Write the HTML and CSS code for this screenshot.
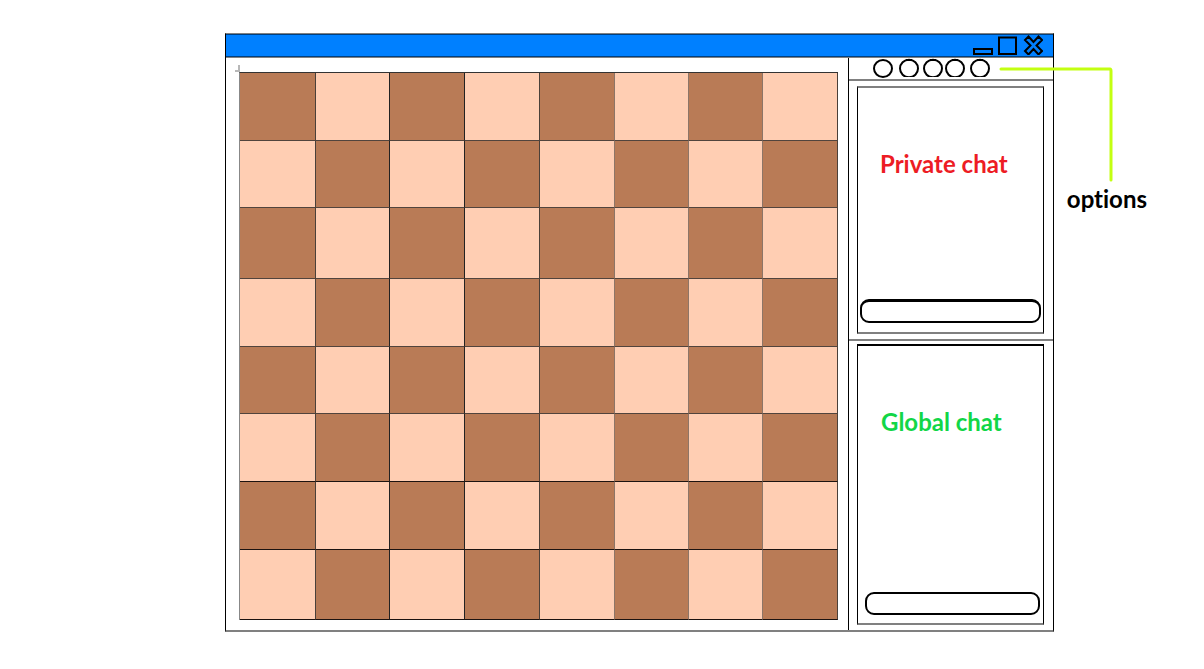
FILE: index.html
```
<!DOCTYPE html>
<html lang="en">
<head>
<meta charset="utf-8">
<title>Chess client wireframe</title>
<link rel="stylesheet" href="styles.css">
</head>
<body>
<main class="window">
  <header class="titlebar">
    <button class="control" type="button" aria-label="Minimise">
      <svg width="20" height="20" viewBox="0 0 20 20"><rect x="1" y="14" width="18" height="5"/></svg>
    </button>
    <button class="control" type="button" aria-label="Maximise">
      <svg width="20" height="20" viewBox="0 0 20 20"><rect x="1" y="2.500" width="17" height="16.500"/></svg>
    </button>
    <button class="control" type="button" aria-label="Close">
      <svg width="20" height="20" viewBox="0 0 20 20"><path d="M5.500 1.500 10.500 7 15.500 1.500 19 5 13.500 10.500 19 16 15.500 19.500 10.500 14 5.500 19.500 2 16 7.500 10.500 2 5Z"/></svg>
    </button>
  </header>
  <div class="content">
    <section class="play-area" aria-label="Chess board">
      <div class="board">
        <div class="rank"><i class="square"></i><i class="square"></i><i class="square"></i><i class="square"></i><i class="square"></i><i class="square"></i><i class="square"></i><i class="square"></i></div>
        <div class="rank"><i class="square"></i><i class="square"></i><i class="square"></i><i class="square"></i><i class="square"></i><i class="square"></i><i class="square"></i><i class="square"></i></div>
        <div class="rank"><i class="square"></i><i class="square"></i><i class="square"></i><i class="square"></i><i class="square"></i><i class="square"></i><i class="square"></i><i class="square"></i></div>
        <div class="rank"><i class="square"></i><i class="square"></i><i class="square"></i><i class="square"></i><i class="square"></i><i class="square"></i><i class="square"></i><i class="square"></i></div>
        <div class="rank"><i class="square"></i><i class="square"></i><i class="square"></i><i class="square"></i><i class="square"></i><i class="square"></i><i class="square"></i><i class="square"></i></div>
        <div class="rank"><i class="square"></i><i class="square"></i><i class="square"></i><i class="square"></i><i class="square"></i><i class="square"></i><i class="square"></i><i class="square"></i></div>
        <div class="rank"><i class="square"></i><i class="square"></i><i class="square"></i><i class="square"></i><i class="square"></i><i class="square"></i><i class="square"></i><i class="square"></i></div>
        <div class="rank"><i class="square"></i><i class="square"></i><i class="square"></i><i class="square"></i><i class="square"></i><i class="square"></i><i class="square"></i><i class="square"></i></div>
        <span class="corner-mark"></span>
      </div>
    </section>
    <aside class="sidebar">
      <nav class="options" aria-label="Options">
        <button class="option" type="button" aria-label="Option 1"><svg width="20" height="20" viewBox="0 0 20 20"><ellipse cx="10" cy="10.500" rx="9" ry="8.500"/></svg></button>
        <button class="option" type="button" aria-label="Option 2"><svg width="20" height="19" viewBox="0 0 20 19"><ellipse cx="10" cy="10.500" rx="9" ry="8.800"/><path class="thick" d="M7 2H13"/></svg></button>
        <button class="option" type="button" aria-label="Option 3"><svg width="20" height="19" viewBox="0 0 20 19"><ellipse cx="10" cy="10.500" rx="9" ry="8.800"/><path class="thick" d="M7 2H13"/></svg></button>
        <button class="option" type="button" aria-label="Option 4"><svg width="20" height="19" viewBox="0 0 20 19"><ellipse cx="10" cy="10.500" rx="9" ry="8.800"/><path class="thick" d="M7 2H13"/></svg></button>
        <button class="option" type="button" aria-label="Option 5"><svg width="20" height="19" viewBox="0 0 20 19"><ellipse cx="10" cy="10.500" rx="9" ry="8.800"/><path class="thick" d="M7 2H13"/></svg></button>
      </nav>
      <section class="chat chat-private">
        <form class="chat-box">
          <label class="chat-title" for="private-message">Private chat</label>
          <input class="message" id="private-message" type="text">
        </form>
      </section>
      <section class="chat chat-global">
        <form class="chat-box">
          <label class="chat-title" for="global-message">Global chat</label>
          <input class="message" id="global-message" type="text">
        </form>
      </section>
    </aside>
  </div>
  <div class="callout">
    <svg class="callout-line" width="114" height="118" viewBox="0 0 114 118"><path d="M2 4H111Q112 4 112 6V115"/></svg>
    <span class="callout-text">options</span>
  </div>
</main>
</body>
</html>
```
FILE: styles.css
```
* {
  box-sizing: border-box;
}

body {
  margin: 0;
  min-height: 100vh;
  padding: 33px 150px 37px 225px;
  display: flex;
  background: #fff;
  color: #000;
  font-family: Lato, sans-serif;
}

button {
  padding: 0;
  border: 0;
  background: none;
}

svg {
  display: block;
  fill: none;
  stroke: #000;
  stroke-width: 2;
}

.window {
  position: relative;
  flex: 1;
  display: flex;
  flex-direction: column;
  border: 1px solid #000;
  border-top-color: #808080;
  border-bottom: 2px solid #808080;
}

.titlebar {
  display: flex;
  justify-content: flex-end;
  align-items: flex-start;
  gap: 5px;
  height: 23px;
  padding-right: 10px;
  background: #0080ff;
  border-top: 1px solid #004080;
  border-bottom: 1px solid #004080;
}

.content {
  flex: 1;
  display: flex;
  border-top: 1px solid #808080;
}

.play-area {
  flex: 1;
  display: flex;
  padding: 14px 10px 10px 13px;
}

.board {
  position: relative;
  flex: 1;
  display: grid;
  grid-template-rows: 68fr 67fr 71fr 68fr 67fr 68fr 68fr 70fr;
  border-top: 1px solid #333;
  border-left: 1px solid #888;
}

.rank {
  display: grid;
  grid-template-columns: 76fr 74fr 75fr 74fr 75fr 74fr 74fr 75fr;
}

.square {
  background: #ffceb3;
  border-right: 1px solid #4a4039;
  border-bottom: 1px solid #51443d;
}

.rank:nth-child(odd) .square:nth-child(odd),
.rank:nth-child(even) .square:nth-child(even) {
  background: #b97b56;
}

.square:nth-child(2),
.square:nth-child(3) {
  border-right-color: #222;
}

.square:nth-child(5),
.square:nth-child(6),
.square:nth-child(7) {
  border-right-color: #8d7567;
}

.rank:nth-child(n+6) .square {
  border-bottom-color: #1c1310;
}

.corner-mark {
  position: absolute;
  left: -5px;
  top: -8px;
  width: 5px;
  height: 7px;
  border-right: 2px solid #b8b8b8;
  border-bottom: 2px solid #b8b8b8;
}

.sidebar {
  width: 205px;
  display: grid;
  grid-template-rows: 23px 260fr 289fr;
  border-left: 1px solid #000;
}

.options {
  display: grid;
  grid-template-columns: 26px 24px 22px 25px 20px;
  align-items: start;
  justify-items: start;
  padding-left: 24px;
  border-bottom: 2px solid #808080;
}

.thick {
  stroke-width: 2;
}

.chat {
  display: flex;
  padding: 5px 9px 5px 8px;
}

.chat-private {
  border-bottom: 2px solid #808080;
}

.chat-global {
  padding-top: 3px;
}

.chat-box {
  flex: 1;
  min-width: 0;
  display: flex;
  flex-direction: column;
  justify-content: space-between;
  padding: 60px 2px 9px;
  border: 1px solid #000;
  border-top: 2px solid #808080;
  border-bottom: 2px solid #808080;
}

.chat-global .chat-box {
  padding: 60px 3px 8px 7px;
  border-top-color: #000;
}

.chat-title,
.callout-text {
  font-size: 24px;
  font-weight: 700;
  line-height: 32px;
  font-variant-ligatures: none;
}

.chat-title {
  padding-left: 20px;
  color: #ed1c24;
}

.chat-global .chat-title {
  padding-left: 16px;
  color: #12d647;
}

.message {
  width: 100%;
  height: 23px;
  padding: 0 8px;
  border: 2px solid #000;
  border-radius: 9px;
  background: #fff;
  font: inherit;
  font-size: 14px;
}

.chat-private .message {
  height: 24px;
  border-top-width: 3px;
}

.callout {
  position: absolute;
  top: 31px;
  right: -94px;
  width: 148px;
  display: flex;
  flex-direction: column;
}

.callout-line {
  stroke: #c3ff12;
  stroke-width: 3;
  stroke-linecap: round;
}

.callout-text {
  align-self: flex-end;
}
```
